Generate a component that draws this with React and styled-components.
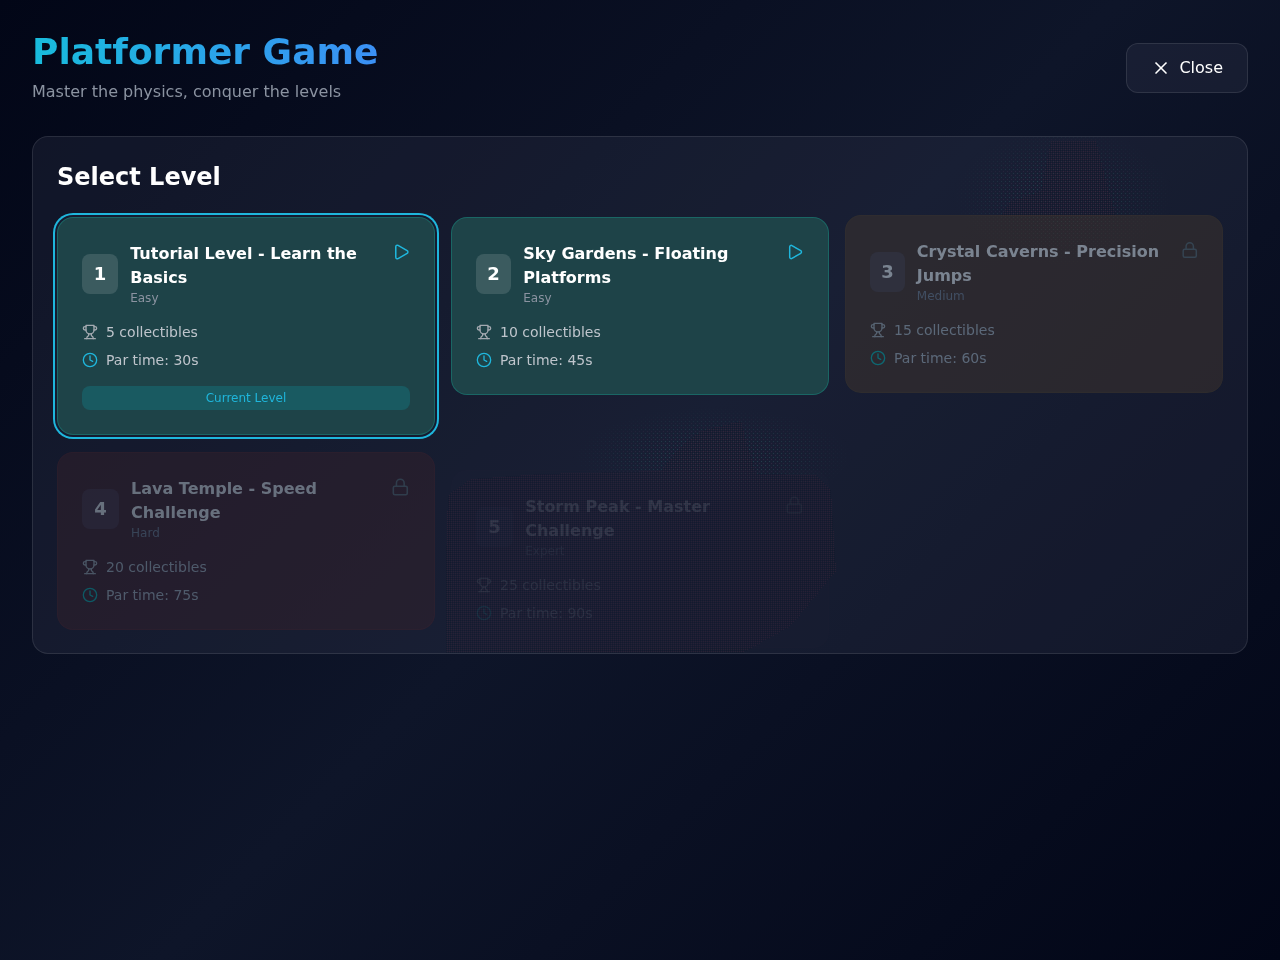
import React from 'react';
import styled, { createGlobalStyle } from 'styled-components';
import { X, Play, Lock, Clock } from 'lucide-react';

const LEVELS = [
  { id: 1, name: 'Tutorial Level - Learn the Basics', difficulty: 'Easy', collectibles: 5, par: 30, tone: 'easy', current: true },
  { id: 2, name: 'Sky Gardens - Floating Platforms', difficulty: 'Easy', collectibles: 10, par: 45, tone: 'easy' },
  { id: 3, name: 'Crystal Caverns - Precision Jumps', difficulty: 'Medium', collectibles: 15, par: 60, tone: 'medium', locked: true, shift: -2, fade: 0.55 },
  { id: 4, name: 'Lava Temple - Speed Challenge', difficulty: 'Hard', collectibles: 20, par: 75, tone: 'hard', locked: true, shift: 1, fade: 0.45 },
  { id: 5, name: 'Storm Peak - Master Challenge', difficulty: 'Expert', collectibles: 25, par: 90, tone: 'expert', locked: true, shift: 19, fade: 0.12 },
];

const TONES = {
  easy: { bg: '#1e4348', border: 'rgba(20, 184, 166, 0.3)' },
  medium: { bg: '#3c342f', border: 'rgba(234, 179, 8, 0.05)' },
  hard: { bg: '#37212b', border: 'rgba(239, 68, 68, 0.08)' },
  expert: { bg: '#1f2138', border: 'rgba(239, 68, 68, 0.05)' },
};

const GlobalStyle = createGlobalStyle`
  html, body {
    margin: 0;
    min-height: 960px;
    background: #020617;
  }
  * {
    box-sizing: border-box;
  }
`;

const Page = styled.div`
  min-height: 960px;
  padding: 32px;
  font-family: 'DejaVu Sans', sans-serif;
  color: #fff;
  background: linear-gradient(135deg, #020617 0%, #0e1529 50%, #020617 100%);
`;

const Header = styled.header`
  display: flex;
  align-items: center;
  justify-content: space-between;
  margin-bottom: 32px;
  will-change: transform;
`;

const Title = styled.h1`
  margin: 0 0 8px;
  font-size: 36px;
  line-height: 40px;
  font-weight: 700;
  width: fit-content;
  color: transparent;
  background: linear-gradient(90deg, #18bbdc, #3b90f5);
  -webkit-background-clip: text;
  background-clip: text;
`;

const Subtitle = styled.p`
  margin: 0;
  font-size: 16px;
  line-height: 24px;
  color: #8b93a1;
`;

const CloseButton = styled.button`
  display: flex;
  align-items: center;
  gap: 8px;
  padding: 12px 24px;
  font: inherit;
  font-size: 16px;
  line-height: 24px;
  color: #fff;
  background: rgba(66, 70, 92, 0.22);
  border: 1px solid rgba(255, 255, 255, 0.1);
  border-radius: 12px;
`;

const Panel = styled.section`
  position: relative;
  padding: 24px;
  background: rgba(66, 70, 92, 0.22);
  border: 1px solid rgba(255, 255, 255, 0.1);
  border-radius: 16px;
  overflow: hidden;
  will-change: transform;
`;

// the dithered smear behind the cards
const Haze = styled.svg`
  position: absolute;
  inset: 0;
  width: 100%;
  height: 100%;
`;

const PanelTitle = styled.h2`
  position: relative;
  margin: 0 0 24px;
  font-size: 24px;
  line-height: 32px;
  font-weight: 700;
`;

const Grid = styled.div`
  position: relative;
  display: grid;
  grid-template-columns: repeat(3, 1fr);
  align-items: start;
  gap: 16px;
`;

const Card = styled.article`
  padding: 24px;
  background: ${({ $tone }) => TONES[$tone].bg};
  border: 1px solid ${({ $tone }) => TONES[$tone].border};
  border-radius: 16px;
  opacity: ${({ $fade }) => $fade ?? 1};
  transform: translateY(${({ $shift }) => $shift ?? 0}px);
  box-shadow: ${({ $current }) => ($current ? '0 0 0 2px #151b30, 0 0 0 4px #1fb6dc' : 'none')};
`;

const CardHead = styled.div`
  display: flex;
  align-items: flex-start;
  justify-content: space-between;
  margin-bottom: 16px;
`;

const HeadLeft = styled.div`
  display: flex;
  align-items: center;
  gap: 12px;
`;

// no flex: none here, the long names squeeze the badge a little
const Badge = styled.div`
  display: flex;
  align-items: center;
  justify-content: center;
  width: 40px;
  height: 40px;
  font-size: 18px;
  line-height: 28px;
  font-weight: 700;
  color: ${({ $locked }) => ($locked ? '#cdd9df' : '#fff')};
  background: ${({ $locked }) => ($locked ? 'rgba(100, 116, 160, 0.2)' : 'rgba(255, 255, 255, 0.13)')};
  border-radius: 8px;
`;

const LevelName = styled.h3`
  margin: 0;
  font-size: 16px;
  line-height: 24px;
  font-weight: 700;
  color: ${({ $locked }) => ($locked ? '#cdd9df' : '#fff')};
`;

const Difficulty = styled.div`
  font-size: 12px;
  line-height: 16px;
  color: ${({ $locked }) => ($locked ? '#64788b' : '#8b93a1')};
`;

const Stats = styled.div`
  display: flex;
  flex-direction: column;
  gap: 8px;
`;

const Stat = styled.div`
  display: flex;
  align-items: center;
  gap: 8px;
  font-size: 14px;
  line-height: 20px;
  color: ${({ $locked }) => ($locked ? '#94a8b4' : '#bfc5cc')};

  svg {
    flex: none;
    color: ${({ $accent, $locked }) => {
      if ($accent) return $locked ? '#07a6a7' : '#1fb6dc';
      return $locked ? '#8a9ca4' : '#a3a9b0';
    }};
  }
`;

const CurrentTag = styled.div`
  margin-top: 16px;
  padding: 4px 0;
  font-size: 12px;
  line-height: 16px;
  text-align: center;
  color: #1fb6dc;
  background: #195a61;
  border-radius: 8px;
`;

const Trophy = () => (
  <svg width="16" height="16" viewBox="0 0 24 24" fill="none" stroke="currentColor" strokeWidth="2" strokeLinecap="round" strokeLinejoin="round">
    <path d="M6 9H4.5a2.5 2.5 0 0 1 0-5H6" />
    <path d="M18 9h1.5a2.5 2.5 0 0 0 0-5H18" />
    <path d="M4 22h16" />
    <path d="M10 14.66V17c0 .55-.47.98-.97 1.21C7.85 18.75 7 20.24 7 22" />
    <path d="M14 14.66V17c0 .55.47.98.97 1.21C16.15 18.75 17 20.24 17 22" />
    <path d="M18 2H6v7a6 6 0 0 0 12 0V2Z" />
  </svg>
);

function LevelCard({ level }) {
  const { locked } = level;
  return (
    <Card $tone={level.tone} $current={level.current} $shift={level.shift} $fade={level.fade}>
      <CardHead>
        <HeadLeft>
          <Badge $locked={locked}>{level.id}</Badge>
          <div>
            <LevelName $locked={locked}>{level.name}</LevelName>
            <Difficulty $locked={locked}>{level.difficulty}</Difficulty>
          </div>
        </HeadLeft>
        {locked ? <Lock size={20} color="#50676f" /> : <Play size={20} color="#1fb6dc" />}
      </CardHead>
      <Stats>
        <Stat $locked={locked}>
          <Trophy />
          {level.collectibles} collectibles
        </Stat>
        <Stat $accent $locked={locked}>
          <Clock size={16} />
          Par time: {level.par}s
        </Stat>
      </Stats>
      {level.current && <CurrentTag>Current Level</CurrentTag>}
    </Card>
  );
}

const HazeShapes = () => (
  <Haze aria-hidden="true" shapeRendering="crispEdges">
    <defs>
      <pattern id="dense" width="2" height="2" patternUnits="userSpaceOnUse">
        <rect width="1" height="1" fill="#3a2336" />
        <rect x="1" y="1" width="1" height="1" fill="#0f1628" />
      </pattern>
      <pattern id="sparse" width="4" height="4" patternUnits="userSpaceOnUse">
        <rect width="1" height="1" fill="#2c5a62" />
        <rect x="2" y="2" width="1" height="1" fill="#4a2f4e" />
      </pattern>
      <radialGradient id="falloff">
        <stop offset="0.3" stopColor="#fff" stopOpacity="0.6" />
        <stop offset="1" stopColor="#fff" stopOpacity="0" />
      </radialGradient>
      <mask id="soft" maskUnits="userSpaceOnUse" x="0" y="0" width="1216" height="518">
        <ellipse cx="1030" cy="60" rx="110" ry="70" fill="url(#falloff)" />
        <ellipse cx="680" cy="320" rx="140" ry="50" fill="url(#falloff)" />
      </mask>
    </defs>
    <rect width="1216" height="518" fill="url(#sparse)" mask="url(#soft)" />
    <g fill="url(#dense)" opacity="0.55">
      <polygon points="415,358 438,342 508,337 628,334 648,309 668,294 708,284 713,304 723,337 783,338 798,354 803,434 758,489 708,517 413,517 413,424" />
      <polygon points="968,79 978,64 1008,54 1018,4 1063,4 1073,44 1083,79" />
    </g>
  </Haze>
);

export default function App() {
  return (
    <>
      <GlobalStyle />
      <Page>
        <Header>
          <div>
            <Title>Platformer Game</Title>
            <Subtitle>Master the physics, conquer the levels</Subtitle>
          </div>
          <CloseButton>
            <X size={20} />
            Close
          </CloseButton>
        </Header>
        <Panel>
          <HazeShapes />
          <PanelTitle>Select Level</PanelTitle>
          <Grid>
            {LEVELS.map((level) => (
              <LevelCard key={level.id} level={level} />
            ))}
          </Grid>
        </Panel>
      </Page>
    </>
  );
}
